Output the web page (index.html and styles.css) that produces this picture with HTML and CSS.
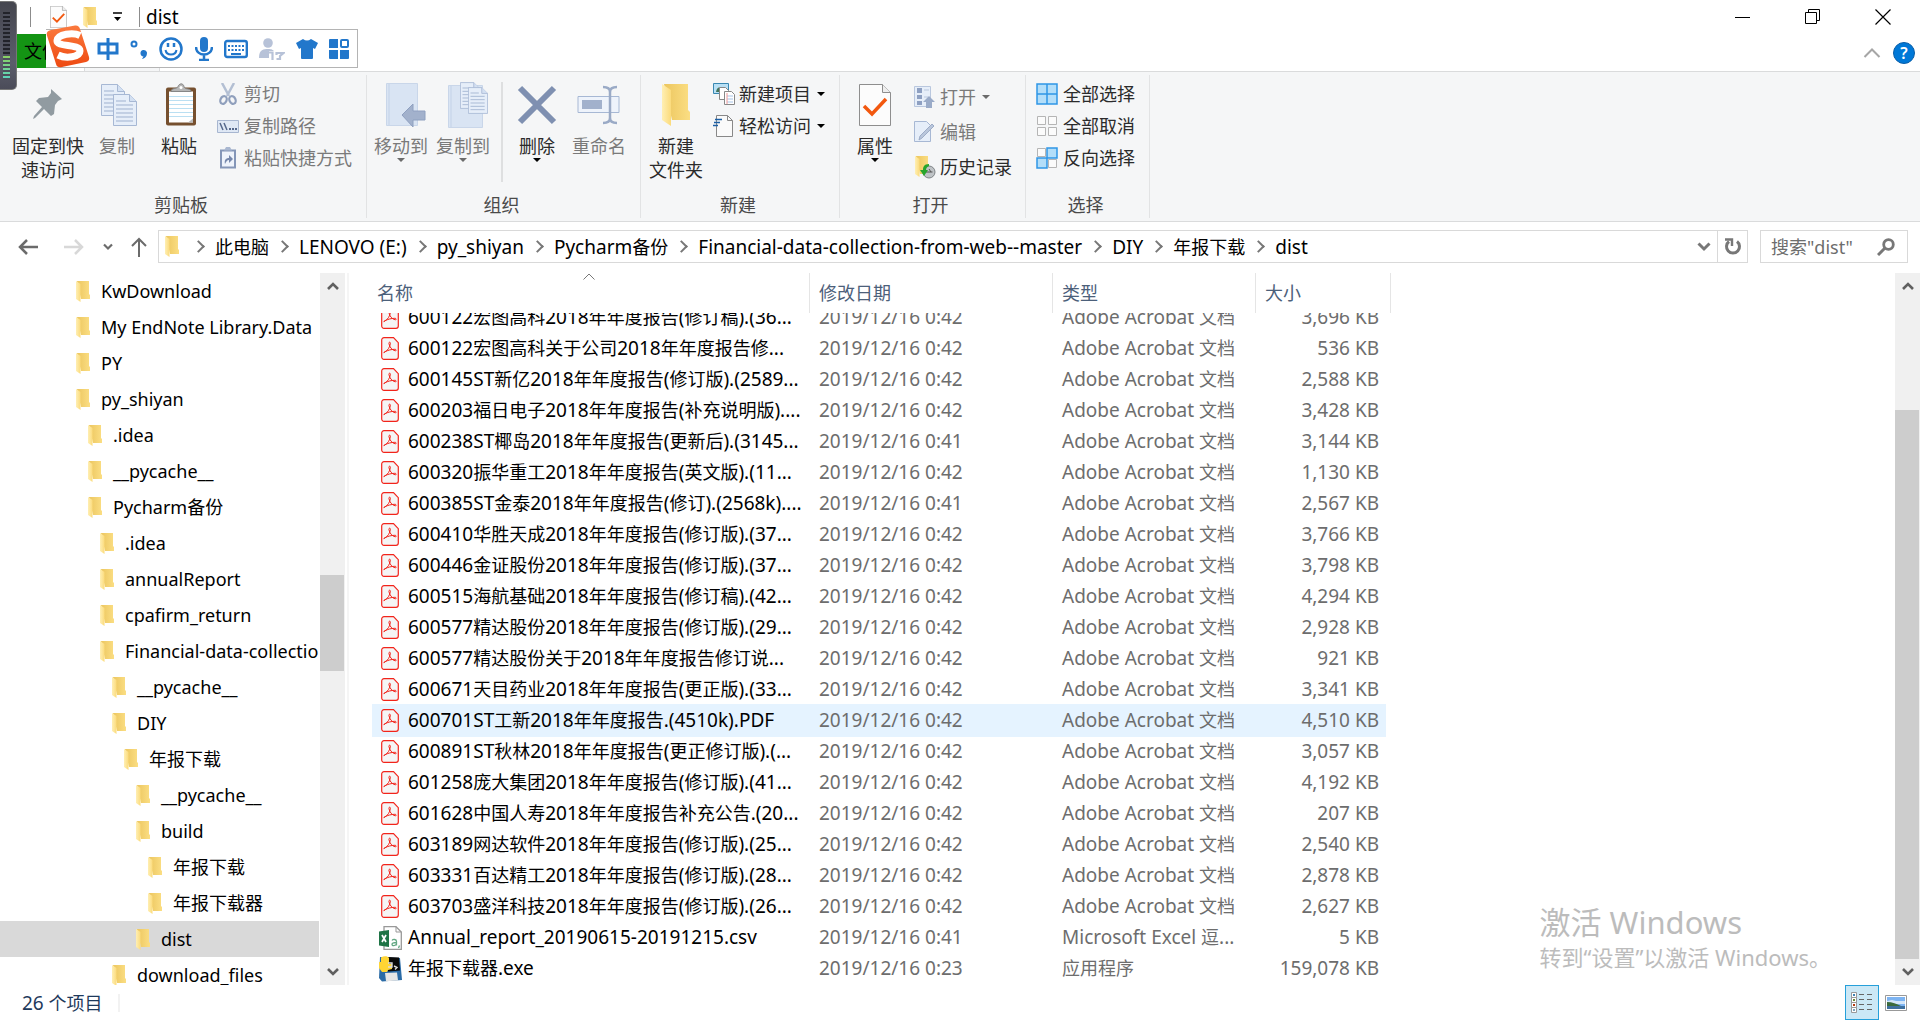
FILE: index.html
```html
<!DOCTYPE html>
<html lang="zh-CN">
<head>
<meta charset="utf-8">
<title>dist</title>
<link rel="stylesheet" href="styles.css">
</head>
<body>
<svg class="defs" width="0" height="0" aria-hidden="true">
  <defs>
    <linearGradient id="g-folder" x1="0" x2="1"><stop offset="0" stop-color="#ecc65f"/><stop offset="1" stop-color="#fbde83"/></linearGradient>
    <linearGradient id="g-flap" x1="0" x2="1"><stop offset="0" stop-color="#ffefb4"/><stop offset="1" stop-color="#fbdb7c"/></linearGradient>
    <linearGradient id="g-sogou" x1="0" y1="0" x2="0" y2="1"><stop offset="0" stop-color="#fb7a3e"/><stop offset="1" stop-color="#ee4a12"/></linearGradient>
    <symbol id="folder" viewBox="0 0 14 21">
      <path d="M1 0h12v13l1 1v4H5z" fill="url(#g-folder)"/>
      <path d="M0 0l4.500 3v18L0 18z" fill="url(#g-flap)"/>
    </symbol>
    <symbol id="pdf" viewBox="0 0 18 23">
      <path d="M3 .7h9.500l4.800 5V20a2.300 2.300 0 0 1-2.300 2.300H3A2.300 2.300 0 0 1 .7 20V3A2.300 2.300 0 0 1 3 .7z" fill="#f5f5f5" stroke="#f2241b" stroke-width="1.200"/>
      <path d="M3.200 15.500c3.500-2 5.800-5.300 6.200-9.200.1-1.500-1.800-1.500-1.500.2.700 3.700 3 6.500 6.200 7.300 1.500.3 1.500-1.500-.2-1.500-3.600 0-7 1-9.800 2.300-1.700.8-1.400 1.900-.9.900z" fill="none" stroke="#f2241b"/>
    </symbol>
    <symbol id="csv" viewBox="0 0 23 24">
      <path d="M5 .7h12l5.300 5.300v17.300H5z" fill="#fff" stroke="#999" stroke-width="1.300"/>
      <path d="M17 .7V6h5.300" fill="none" stroke="#999"/>
      <path d="M0 5.500l10-1.500v17L0 19.500z" fill="#1f7446"/>
      <path d="M3 9l4 7M7 9l-4 7" stroke="#fff" stroke-width="1.700"/>
      <path d="M13 14.500c1-1.500 4.500-1.500 4.500 1v4M17.500 16.500c-3 0-4.500.5-4.500 2s3 1.800 4.500-.5M20.500 19.500l-1 2.500" fill="none" stroke="#64a884" stroke-width="1.300"/>
    </symbol>
    <symbol id="exe" viewBox="0 0 24 26">
      <path d="M2 1l20 1 2 22-20 1.500L1 22z" fill="#2b6ba6"/>
      <path d="M10 1l11 .5 1 13-12 1z" fill="#0a0a0a"/>
      <path d="M7 17l12-.5 1 8-12 .8z" fill="#e6e6e6"/>
      <path d="M3 1.500C6-.5 10 0 11 2v6h3v5l-4 1-1 2-5 0-3-4V6h2z" fill="#ffd534"/>
      <path d="M10 7h4v4h-4M16 10l3 1.500-2 2" fill="none" stroke="#ddd" stroke-width="1.400"/>
    </symbol>
    <symbol id="up" viewBox="0 0 12 10"><path d="M1 8l5-5 5 5" fill="none" stroke="#606060" stroke-width="2.600"/></symbol>
    <symbol id="down" viewBox="0 0 12 10"><path d="M1 2l5 5 5-5" fill="none" stroke="#606060" stroke-width="2.600"/></symbol>
    <symbol id="doc-check" viewBox="0 0 32 42">
      <path d="M.5.500h23l8 8v33H.5z" fill="#fcfcfc" stroke="#8e8e8e"/>
      <path d="M23.500.5v8h8" fill="#eee" stroke="#8e8e8e"/>
      <path d="M5 22l8 8 14-15" fill="none" stroke="#f2580f" stroke-width="3.500"/>
    </symbol>
    <symbol id="page" viewBox="0 0 24 32">
      <path d="M.5.500h16l7 7v24H.5z" fill="#e6eef9" stroke="#a7b8d4"/>
      <path d="M16.500.5v7h7" fill="#d3e0f2" stroke="#a7b8d4"/>
      <path d="M3 7h10M3 11h17M3 15h17M3 19h17M3 23h17M3 27h17" stroke="#9fb1cf" fill="none"/>
    </symbol>
  </defs>
</svg>

<div class="window">
  <header class="titlebar">
    <span class="bar bar-first"></span>
    <button class="plain" aria-label="属性"><svg width="17" height="22"><use href="#doc-check"/></svg></button>
    <button class="plain" aria-label="新建文件夹"><svg width="14" height="21"><use href="#folder"/></svg></button>
    <button class="plain" aria-label="自定义快速访问工具栏"><svg width="10" height="10" viewBox="0 0 10 10"><path d="M0 1h9" stroke="#000" stroke-width="1.500"/><path d="M1 5h7L4.500 9z"/></svg></button>
    <span class="bar"></span>
    <h1 class="title">dist</h1>
    <div class="window-buttons">
      <button class="plain" aria-label="最小化"><svg width="16" height="16"><path d="M0 8.500h15" stroke="#000"/></svg></button>
      <button class="plain" aria-label="还原"><svg width="16" height="16"><path d="M.5 3.500h11v11H.5zM3.500 3.500v-3h11v11h-3" fill="none" stroke="#000"/></svg></button>
      <button class="plain" aria-label="关闭"><svg width="16" height="16"><path d="M.5.500l15 15M15.500.500l-15 15" stroke="#000" stroke-width="1.200"/></svg></button>
    </div>
  </header>

  <div class="tabs">
    <button class="file-tab">文件</button>
    <span class="home-tab"></span>
    <div class="tab-tools">
      <button class="plain" aria-label="最小化功能区"><svg width="18" height="12"><path d="M1.500 10l7.500-7.500 7.500 7.500" fill="none" stroke="#a6a6a6" stroke-width="2"/></svg></button>
      <button class="help" aria-label="帮助">?</button>
    </div>
  </div>

  <section class="ribbon">
    <div class="group clipboard">
      <div class="tools">
        <button class="big pin"><svg width="32" height="42" viewBox="0 0 32 42"><path d="M19 5l11 10-4 2-3 4-1 9-3 2-7-7-9 9-2 1 1-3 8-9-6-6 3-3 9-1 3-4z" fill="#919ba1"/></svg>固定到快<br>速访问</button>
        <button class="big copy" disabled><svg width="36" height="42" viewBox="0 0 36 42"><use href="#page" width="24" height="32"/><use href="#page" x="12" y="10" width="24" height="32"/></svg>复制</button>
        <button class="big paste"><svg width="32" height="43" viewBox="0 0 32 43"><rect x="1" y="4" width="30" height="38" rx="2" fill="#76502f"/><path d="M4 8h24v31H4z" fill="#fff"/><path d="M4 13h24M4 17h24M4 21h24M4 25h24M4 29h24M4 33h24" stroke="#badff2"/><path d="M23 39l5-4v4z" fill="#bbb"/><path d="M6 8c0-4 6-2 7-5s5-4 6 0 7 1 7 5z" fill="#b6b6b6" stroke="#878787"/><circle cx="16" cy="4" r="1.500" fill="#fff"/></svg>粘贴</button>
        <div class="stack">
          <button class="small" disabled><svg width="22" height="22" viewBox="0 0 22 22"><path d="M5 0l7 13M17 0l-7 13" stroke="#b3bfd3" stroke-width="2.500"/><ellipse cx="6.500" cy="17" rx="3" ry="4" transform="rotate(25 6.500 17)" fill="none" stroke="#8f9fbc" stroke-width="2.200"/><ellipse cx="15.500" cy="17" rx="3" ry="4" transform="rotate(-25 15.500 17)" fill="none" stroke="#8f9fbc" stroke-width="2.200"/></svg>剪切</button>
          <button class="small" disabled><svg width="22" height="22" viewBox="0 0 22 22"><path d="M.5 5.500h21v12H.5z" fill="#dfe8f5" stroke="#a7b6d0"/><path d="M3 8l3 7M7 8l3 7" stroke="#55688c" stroke-width="1.500"/><path d="M12 14h2M15 14h2M18 14h2" stroke="#55688c" stroke-width="2"/></svg>复制路径</button>
          <button class="small" disabled><svg width="22" height="22" viewBox="0 0 22 22"><path d="M4 3.500h14v17H4z" fill="#eef3fb" stroke="#8496b8" stroke-width="2"/><path d="M7 3.500h8L13 0H9z" fill="#a9b7d0"/><path d="M8 17c-1-4 1-6 4-6V8l4 4-4 4v-3c-2 0-3 2-4 4z" fill="#7688ac"/></svg>粘贴快捷方式</button>
        </div>
      </div>
      <h2>剪贴板</h2>
    </div>

    <div class="group organize">
      <div class="tools">
        <button class="big org" disabled><svg width="40" height="44" viewBox="0 0 40 44"><path d="M.5.500h31v42H.5z" fill="#d9e4f3" stroke="#c9d6e9"/><path d="M3 1v41" stroke="#c3d2e8"/><path d="M16 32l11-11v7h12v9H27v7z" fill="#a2b1cc" stroke="#8fa0c0"/></svg>移动到<i class="arrow"></i></button>
        <button class="big org" disabled><svg width="40" height="46" viewBox="0 0 40 46"><path d="M.5 3.500h34v42H.5z" fill="#d9e4f3" stroke="#c9d6e9"/><path d="M3 4v41" stroke="#c3d2e8"/><use href="#page" x="12" y="0" width="20" height="27"/><use href="#page" x="20" y="5" width="20" height="27"/></svg>复制到<i class="arrow"></i></button>
        <span class="divider"></span>
        <button class="big del"><svg width="40" height="40" viewBox="0 0 40 40"><path d="M3 3l34 34M37 3L3 37" stroke="#7f90b1" stroke-width="6"/></svg>删除<i class="arrow"></i></button>
        <button class="big ren" disabled><svg width="44" height="40" viewBox="0 0 44 40"><path d="M1 11.500h41v16H1z" fill="#eef3fb" stroke="#a7b8d4"/><path d="M5 15h20v9H5z" fill="#a2b1cc"/><path d="M26 2c5 0 7 2 7 5v26c0 3-2 5-7 5M40 2c-5 0-7 2-7 5v26c0 3 2 5 7 5" fill="none" stroke="#9aaac6" stroke-width="2.500"/></svg>重命名</button>
      </div>
      <h2>组织</h2>
    </div>

    <div class="group create">
      <div class="tools">
        <button class="big new"><svg width="28" height="42"><use href="#folder"/></svg>新建<br>文件夹</button>
        <div class="stack">
          <button class="small"><svg width="22" height="22" viewBox="0 0 22 22"><path d="M.5.500h15v10H.5z" fill="#b9e0f5" stroke="#3a88b2"/><path d="M3 9c1-6 5-6 6 0z" fill="#42765e"/><path d="M6.500 4.500h6l3 3v9h-9z" fill="#fff" stroke="#888"/><path d="M11.500 8.500h7l3 3v10h-10z" fill="#fff" stroke="#888"/><path d="M14 13h6M14 16h6M14 19h6" stroke="#a6c4e8"/><path d="M14 10v11" stroke="#e99"/></svg>新建项目<i class="arrow"></i></button>
          <button class="small"><svg width="22" height="22" viewBox="0 0 22 22"><path d="M3.500.500h11l5 5v16h-16z" fill="#fafafa" stroke="#888"/><path d="M14.500.5v5h5" fill="none" stroke="#888"/><path d="M2 4.500h7M1 7.500h6M0 10.500h5" stroke="#1d5fa5" stroke-width="1.500"/></svg>轻松访问<i class="arrow"></i></button>
        </div>
      </div>
      <h2>新建</h2>
    </div>

    <div class="group open">
      <div class="tools">
        <button class="big prop"><svg width="32" height="42"><use href="#doc-check"/></svg>属性<i class="arrow"></i></button>
        <div class="stack wide">
          <button class="small" disabled><svg width="22" height="24" viewBox="0 0 22 24"><path d="M.5 1.500h16v20H.5z" fill="#e6eef9" stroke="#b9c7de"/><path d="M3 3h5v5H3zM3 10h5v4H3zM3 16h5v4H3z" fill="#8ea0c2"/><path d="M10 5h5M10 12h4" stroke="#b9c7de"/><path d="M15 11l6 6h-3v6h-6v-6H9z" fill="#9aabc8"/></svg>打开<i class="arrow"></i></button>
          <button class="small" disabled><svg width="22" height="24" viewBox="0 0 22 24"><path d="M.5 1.500h12l4 4v16H.5z" fill="#e6eef9" stroke="#a7b8d4"/><path d="M5 20l1-4L18 4l2 2L8 18z" fill="#b9c6db" stroke="#9dacc7"/></svg>编辑</button>
          <button class="small"><svg width="22" height="24" viewBox="0 0 22 24"><use href="#folder" x="1" y="1" width="14" height="21"/><circle cx="15" cy="17" r="6" fill="#bfc3c6" stroke="#7e8386"/><path d="M11.500 17h7M15 14l2 3" stroke="#555"/><path d="M15 9c-5 0-6 3-6 6H6l4 6 4-6h-2c0-2 1-3 3-4z" fill="#27a52c"/></svg>历史记录</button>
        </div>
      </div>
      <h2>打开</h2>
    </div>

    <div class="group select">
      <div class="tools">
        <div class="stack">
          <button class="small"><svg width="22" height="22" viewBox="0 0 22 22"><path d="M1 1h10v10H1zM11 1h10v10H11zM1 11h10v10H1zM11 11h10v10H11z" fill="#b3def9" stroke="#2f96e6" stroke-width="1.500"/></svg>全部选择</button>
          <button class="small"><svg width="22" height="22" viewBox="0 0 22 22"><path d="M1.500 1.500h8v8h-8zM12.500 1.500h8v8h-8zM1.500 12.500h8v8h-8zM12.500 12.500h8v8h-8z" fill="#fbfbfb" stroke="#b5b5b5"/></svg>全部取消</button>
          <button class="small"><svg width="22" height="22" viewBox="0 0 22 22"><path d="M1.500 1.500h8v8h-8zM12.500 12.500h8v8h-8z" fill="#fbfbfb" stroke="#b5b5b5"/><path d="M11 1h10v10H11zM1 11h10v10H1z" fill="#b3def9" stroke="#2f96e6" stroke-width="1.500"/></svg>反向选择</button>
        </div>
      </div>
      <h2>选择</h2>
    </div>
  </section>

  <nav class="address-row">
    <div class="history">
      <button class="plain" aria-label="后退"><svg width="20" height="16"><path d="M9 1L2 8l7 7M2 8h18" fill="none" stroke="#6b6b6b" stroke-width="2.500"/></svg></button>
      <button class="plain" aria-label="前进"><svg width="20" height="16"><path d="M11 1l7 7-7 7M18 8H0" fill="none" stroke="#d8d8d8" stroke-width="2.500"/></svg></button>
      <button class="plain" aria-label="最近浏览的位置"><svg width="10" height="8"><path d="M1 1.500l4 4 4-4" fill="none" stroke="#6b6b6b" stroke-width="2.200"/></svg></button>
      <button class="plain" aria-label="上移"><svg width="16" height="20"><path d="M1 9l7-7 7 7M8 2v18" fill="none" stroke="#6b6b6b" stroke-width="2"/></svg></button>
    </div>
    <div class="address">
      <svg width="14" height="21"><use href="#folder"/></svg>
      <ol class="crumbs">
        <li>此电脑</li><li class="la">LENOVO (E:)</li><li class="la">py_shiyan</li><li><span class="la">Pycharm</span>备份</li><li class="la">Financial-data-collection-from-web--master</li><li class="la">DIY</li><li>年报下载</li><li class="la">dist</li>
      </ol>
      <button class="plain" aria-label="以前的位置"><svg width="14" height="10"><path d="M1.500 1.500L7 7l5.500-5.500" fill="none" stroke="#777" stroke-width="3"/></svg></button>
      <button class="plain refresh" aria-label="刷新"><svg width="18" height="18"><path d="M13 3.500a6.500 6.500 0 1 1-8 0" fill="none" stroke="#777" stroke-width="3"/><path d="M1 1.500h7V8" fill="none" stroke="#777" stroke-width="2.400"/></svg></button>
    </div>
    <label class="search"><input type="text" placeholder='搜索"dist"' aria-label="搜索"><svg width="18" height="18"><circle cx="11.500" cy="6.500" r="4.800" fill="none" stroke="#777" stroke-width="2.800"/><path d="M8 10l-7 7" stroke="#777" stroke-width="3"/></svg></label>
  </nav>

  <main class="panes">
    <ul class="tree">
      <li class="l0">KwDownload</li>
      <li class="l0">My EndNote Library.Data</li>
      <li class="l0">PY</li>
      <li class="l0">py_shiyan</li>
      <li class="l1">.idea</li>
      <li class="l1">__pycache__</li>
      <li class="l1">Pycharm备份</li>
      <li class="l2">.idea</li>
      <li class="l2">annualReport</li>
      <li class="l2">cpafirm_return</li>
      <li class="l2">Financial-data-collection-from-web--master</li>
      <li class="l3">__pycache__</li>
      <li class="l3">DIY</li>
      <li class="l4">年报下载</li>
      <li class="l5">__pycache__</li>
      <li class="l5">build</li>
      <li class="l6">年报下载</li>
      <li class="l6">年报下载器</li>
      <li class="l5 selected">dist</li>
      <li class="l3">download_files</li>
    </ul>
    <div class="scrollbar tree-scroll">
      <button aria-label="向上滚动"><svg width="12" height="10"><use href="#up"/></svg></button>
      <span class="gap-before"></span><span class="thumb"></span><span class="gap-after"></span>
      <button aria-label="向下滚动"><svg width="12" height="10"><use href="#down"/></svg></button>
    </div>
    <section class="files">
      <table>
        <thead><tr><th class="c-name">名称<svg class="sort" width="12" height="7"><path d="M.5 6.500l5.500-5.500 5.500 5.500" fill="none" stroke="#777"/></svg></th><th class="c-date">修改日期</th><th class="c-type">类型</th><th class="c-size">大小</th></tr></thead>
        <tbody id="rows"></tbody>
      </table>
      <aside class="watermark"><p class="wm-title">激活 Windows</p><p>转到“设置”以激活 Windows。</p></aside>
    </section>
    <div class="scrollbar file-scroll">
      <button aria-label="向上滚动"><svg width="12" height="10"><use href="#up"/></svg></button>
      <span class="gap-before"></span><span class="thumb"></span>
      <button aria-label="向下滚动"><svg width="12" height="10"><use href="#down"/></svg></button>
    </div>
  </main>

  <footer class="status">
    <span class="count"><span class="la">26</span> 个项目</span>
    <div class="views">
      <button class="details" aria-label="详细信息"><svg width="22" height="22"><path d="M.5.500h5v5h-5zM.5 5.500h5v5h-5zM.5 10.500h5v5h-5zM.5 15.500h5v5h-5z" fill="#fff" stroke="#999"/><path d="M2 3h2" stroke="#3b83b5" stroke-width="2"/><path d="M2 8h2" stroke="#6a8a3a" stroke-width="2"/><path d="M2 13h2" stroke="#b33a12" stroke-width="2"/><path d="M2 18h2" stroke="#7ba3bb" stroke-width="2"/><path d="M8 2.500h5M16 2.500h5M8 7.500h5M16 7.500h5M8 12.500h5M16 12.500h5M8 17.500h5M16 17.500h5" stroke="#666"/></svg></button>
      <button class="plain" aria-label="大缩略图"><svg width="22" height="16"><path d="M.5.500h21v15H.5z" fill="#fff" stroke="#999"/><path d="M2 2h18v12H2z" fill="#7db4f2"/><path d="M2 6l5-1 4 1h9v3H2z" fill="#d3e6f9"/><path d="M2 7c5 0 10 2 14 4H2z" fill="#3a6a3c"/><path d="M2 11h18v3H2z" fill="#3d6f9e"/></svg></button>
    </div>
  </footer>

  <div class="meter" aria-hidden="true"><span></span></div>

  <div class="ime">
    <svg class="sogou" width="46" height="44" viewBox="0 0 46 44"><path d="M5 5L29 .5q4-.5 5 3.500l9 28q1 4-3 5L16 42q-5 1-6-3L.8 10Q0 6 5 5z" fill="url(#g-sogou)"/><path d="M34 10.500C27 7 12 9 11 15.500c-1 7 23 3 23 10.500 0 6-14 8-22 4" fill="none" stroke="#fff" stroke-width="7"/></svg>
    <svg width="22" height="22" viewBox="0 0 22 22"><path d="M2 6h18v9H2zM11 0v22" fill="none" stroke="#2277cb" stroke-width="3"/></svg>
    <svg width="18" height="22" viewBox="0 0 18 22"><circle cx="4" cy="6" r="2.500" fill="none" stroke="#2277cb" stroke-width="2"/><path d="M13.500 18.500a3.300 3.300 0 1 1 3.500-4c0 4-2 6-5 6.500z" fill="#2277cb"/></svg>
    <svg width="24" height="24" viewBox="0 0 24 24"><circle cx="12" cy="12" r="10.500" fill="none" stroke="#2277cb" stroke-width="2.500"/><path d="M6.500 13c1 6 10 6 11 0" fill="none" stroke="#2277cb" stroke-width="2"/><path d="M9 6v4M15 6v4" stroke="#2277cb" stroke-width="2.500"/></svg>
    <svg width="18" height="24" viewBox="0 0 18 24"><rect x="5" y="0" width="8" height="15" rx="4" fill="#2277cb"/><path d="M1 10c0 10 16 10 16 0M9 17v6M4 23h10" fill="none" stroke="#2277cb" stroke-width="2.500"/></svg>
    <svg width="24" height="20" viewBox="0 0 24 20"><rect x="1.200" y="2" width="21.600" height="16" rx="2" fill="none" stroke="#2277cb" stroke-width="2.400"/><path d="M4 7h16M4 11h16" stroke="#2277cb" stroke-width="2" stroke-dasharray="2 1.500"/><path d="M7 15h10" stroke="#2277cb" stroke-width="2"/></svg>
    <svg width="26" height="22" viewBox="0 0 26 22"><circle cx="9" cy="5" r="4.800" fill="#b7c2d8"/><path d="M0 20c0-9 5-9 9-9s5 1 6 2h-5v7z" fill="#b7c2d8"/><path d="M10 14.500h3.500V22M17 15h7.500l-3.500 3v3h-3.500M17.500 14v3" fill="none" stroke="#b7c2d8" stroke-width="2.200"/></svg>
    <svg width="22" height="22" viewBox="0 0 22 22"><path d="M7 1q4 3 8 0l7 4-3 6-2-1v10q0 1-1 1H6q-1 0-1-1V10l-2 1-3-6z" fill="#2277cb"/></svg>
    <svg width="20" height="20" viewBox="0 0 20 20"><path d="M0 1q0-1 1-1h8v9H0zM0 11h9v9H1q-1 0-1-1zM11 11h9v8q0 1-1 1h-8z" fill="#2277cb"/><rect x="12" y="1" width="7" height="7" rx="1" fill="none" stroke="#2277cb" stroke-width="2"/></svg>
  </div>
</div>
<script src="files.js"></script>
</body>
</html>
```

FILE: styles.css
```css
* { box-sizing: border-box; }
body {
  margin: 0;
  background: #fff;
  color: #000;
  font: 18px/24px "Noto Sans", "Noto Sans CJK SC", sans-serif;
}
h1, h2, p, ul, ol { margin: 0; padding: 0; font-weight: 400; font-size: 18px; list-style: none; }
button { font: inherit; color: inherit; border: 0; padding: 0; background: none; }
.defs { position: absolute; }
.la { font-size: 19px; }
.tree .la { font-size: 18px; }
.window { position: relative; display: flex; flex-direction: column; min-height: 100vh; overflow: hidden; }
.plain { display: flex; align-items: center; justify-content: center; }

.titlebar { display: flex; align-items: center; height: 34px; padding-left: 30px; gap: 16px; }
.titlebar .bar { width: 1px; height: 20px; background: #8c8c8c; }
.titlebar .bar-first { margin-right: 3px; }
.title { margin-left: -10px; font-size: 19px; }
.window-buttons { display: flex; margin-left: auto; padding-right: 2px; }
.window-buttons button { width: 70px; height: 34px; }

.tabs { display: flex; height: 37px; }
.file-tab { width: 84px; height: 34px; padding-left: 24px; background: #149414; text-align: left; }
.home-tab { width: 76px; border: solid #dadbdc; border-width: 0 1px; background: #f5f6f7; }
.tab-tools { display: flex; align-items: center; gap: 12px; margin-left: auto; padding-right: 5px; }
.help { width: 22px; height: 22px; border-radius: 50%; border: 1px solid #0a5ea8; background: #0078d7; color: #fff; font-size: 16px; line-height: 20px; font-weight: 600; }

.ribbon { display: flex; height: 151px; padding: 3px 0; background: #f5f6f7; border: solid #dadbdc; border-width: 1px 0; color: #2b2b2b; }
.group { display: flex; flex-direction: column; border-right: 1px solid #e2e3e4; }
.group h2 { margin-top: auto; padding: 0 4px 2px 0; text-align: center; color: #4a4a4a; line-height: 22px; }
.tools { display: flex; padding-top: 7px; }
.clipboard { width: 367px; }
.clipboard .tools { padding-left: 10px; }
.organize { width: 274px; }
.organize .tools { padding-left: 3px; }
.create { width: 199px; }
.open { width: 186px; }
.select { width: 124px; }
.big { display: flex; flex-direction: column; align-items: center; justify-content: flex-start; width: 62px; }
.big svg { height: 46px; margin-bottom: 6px; }
.copy svg, .paste svg { margin-left: 4px; }
.org svg { margin-left: 10px; }
.pin { width: 76px; }
.new, .prop { width: 70px; }
.divider { width: 2px; height: 100px; margin-left: 7px; background: #dedfe0; }
.del { margin-left: 3px; }
button:disabled { color: #7a7a7a; }
.arrow { width: 0; height: 0; border: solid transparent; border-width: 4px 4px 0; border-top-color: #000; }
button:disabled .arrow { border-top-color: #6b6b6b; }
.stack { display: flex; flex-direction: column; padding-left: 2px; gap: 8px; }
.clipboard .stack { padding-left: 7px; }
.select .stack { padding-left: 10px; }
.stack.wide { gap: 11px; padding: 3px 0 0 4px; }
.small { display: flex; align-items: center; gap: 5px; height: 24px; white-space: nowrap; }
.small .arrow { margin-left: 2px; }
.create .small, .open .small { gap: 4px; }

.address-row { display: flex; height: 51px; padding: 8px 12px 0 18px; }
.history { display: flex; align-items: center; width: 140px; height: 33px; justify-content: space-between; padding-right: 11px; }
.history button:nth-child(2) { margin-left: 8px; }
.address { display: flex; flex: 1; align-items: center; height: 33px; border: 1px solid #d9d9d9; padding-left: 6px; }
.crumbs { display: flex; flex: 1; }
.crumbs li { display: flex; align-items: center; white-space: nowrap; }
.crumbs li::before { content: ""; width: 7px; height: 7px; margin: 0 12px 0 9px; border: solid #777; border-width: 2px 2px 0 0; transform: rotate(45deg); }
.crumbs li:first-child::before { margin-left: 15px; }
.refresh { width: 30px; height: 31px; margin-left: 6px; border-left: 1px solid #d9d9d9; }
.search { display: flex; align-items: center; width: 148px; height: 33px; margin-left: 12px; padding: 0 12px 0 10px; border: 1px solid #d9d9d9; }
.search input { flex: 1; min-width: 0; width: 80px; padding: 0; border: 0; outline: 0; font: inherit; }
.search input::placeholder { color: #6d6d6d; }

.panes { display: flex; flex: 1; height: 712px; }
.tree { width: 320px; height: 712px; overflow: hidden; border-right: 1px solid #fff; }
.tree li { height: 36px; line-height: 36px; white-space: nowrap; overflow: hidden; }
.tree svg { margin-right: 11px; vertical-align: middle; position: relative; top: -2px; }
.l0 { padding-left: 76px; }
.l1 { padding-left: 88px; }
.l2 { padding-left: 100px; }
.l3 { padding-left: 112px; }
.l4 { padding-left: 124px; }
.l5 { padding-left: 136px; }
.l6 { padding-left: 148px; }
.selected { background: #d9d9d9; }

.scrollbar { display: flex; flex-direction: column; width: 25px; height: 712px; background: #f0f0f0; }
.scrollbar button { display: flex; align-items: center; justify-content: center; height: 26px; flex: none; }
.thumb { background: #cdcdcd; margin-right: 1px; }
.tree-scroll .gap-before { flex: 276; }
.tree-scroll .thumb { flex: 96; }
.tree-scroll .gap-after { flex: 288; }
.file-scroll .gap-before { flex: 111; }
.file-scroll .thumb { flex: 549; }

.files { position: relative; flex: 1; margin-left: 2px; border-left: 2px solid #f5f5f5; padding-left: 23px; }
table { border-collapse: separate; border-spacing: 0; table-layout: fixed; width: 1019px; }
th { position: relative; height: 40px; padding: 0 0 0 9px; border-right: 1px solid #e5e5e5; text-align: left; font-weight: 400; color: #4c607a; }
th.c-name { width: 438px; padding-left: 5px; }
th.c-date { width: 243px; }
th.c-type { width: 203px; }
th.c-size { width: 135px; }
.sort { position: absolute; left: 211px; top: 0; }
td { height: 31px; padding: 0; line-height: 31px; color: #6d6d6d; }
td > div { display: flex; align-items: center; height: 31px; padding-left: 9px; white-space: nowrap; }
td.name > div { padding-left: 6px; color: #000; }
td.size > div { justify-content: flex-end; padding-right: 12px; }
.icon { display: flex; flex: none; justify-content: center; width: 24px; margin-right: 6px; }
.partial td { height: 20px; }
.partial td > div { height: 20px; align-items: flex-end; overflow: hidden; }
.partial .icon { height: 31px; align-items: center; }
.hover td > div { background: #e5f3ff; box-shadow: 0 1px #e5f3ff, 0 -1px #e5f3ff; }
.hover td.size > div { margin-right: 5px; padding-right: 7px; }

.watermark { position: absolute; right: 64px; bottom: 12px; color: #bcbcbc; }
.watermark p { font-size: 22px; line-height: 32px; }
.watermark .wm-title { font-size: 31px; line-height: 38px; }

.status { display: flex; align-items: center; height: 35px; padding-left: 22px; color: #1e395b; }
.count { padding-right: 16px; border-right: 2px solid #f2f2f2; line-height: 18px; }
.views { display: flex; gap: 6px; margin-left: auto; padding-right: 13px; }
.details { display: flex; align-items: center; justify-content: center; width: 34px; height: 35px; border: 1px solid #26a0da; background: #cbe8f6; }

.meter { position: absolute; left: 0; top: 1px; width: 17px; height: 89px; padding: 10px 0 9px 3px; border-radius: 0 5px 5px 0; border: 1px solid #777; border-left: 0; background: linear-gradient(#45464f, #5b5d6b 70%, #4b4c59); }
.meter span { display: block; width: 7px; height: 68px; background: repeating-linear-gradient(transparent 0 2px, #4d4f5b 2px 4px), linear-gradient(#22232a 0 42px, #8fd05a 42px, #59d4c4); }

.ime { position: absolute; left: 46px; top: 29px; display: flex; align-items: center; justify-content: space-between; height: 39px; width: 312px; padding-right: 8px; background: #fff; border: 1px solid #b4b4b4; border-left: 0; }
.ime .sogou { margin: -4px -6px 0 0; }
```

FILE: files.js
```javascript
const acrobat = "Adobe Acrobat 文档";
const files = [
  ["pdf", "600122宏图高科2018年年度报告(修订稿).(36...", "2019/12/16 0:42", acrobat, "3,696 KB", "partial"],
  ["pdf", "600122宏图高科关于公司2018年年度报告修...", "2019/12/16 0:42", acrobat, "536 KB"],
  ["pdf", "600145ST新亿2018年年度报告(修订版).(2589...", "2019/12/16 0:42", acrobat, "2,588 KB"],
  ["pdf", "600203福日电子2018年年度报告(补充说明版)....", "2019/12/16 0:42", acrobat, "3,428 KB"],
  ["pdf", "600238ST椰岛2018年年度报告(更新后).(3145...", "2019/12/16 0:41", acrobat, "3,144 KB"],
  ["pdf", "600320振华重工2018年年度报告(英文版).(11...", "2019/12/16 0:42", acrobat, "1,130 KB"],
  ["pdf", "600385ST金泰2018年年度报告(修订).(2568k)....", "2019/12/16 0:41", acrobat, "2,567 KB"],
  ["pdf", "600410华胜天成2018年年度报告(修订版).(37...", "2019/12/16 0:42", acrobat, "3,766 KB"],
  ["pdf", "600446金证股份2018年年度报告(修订版).(37...", "2019/12/16 0:42", acrobat, "3,798 KB"],
  ["pdf", "600515海航基础2018年年度报告(修订稿).(42...", "2019/12/16 0:42", acrobat, "4,294 KB"],
  ["pdf", "600577精达股份2018年年度报告(修订版).(29...", "2019/12/16 0:42", acrobat, "2,928 KB"],
  ["pdf", "600577精达股份关于2018年年度报告修订说...", "2019/12/16 0:42", acrobat, "921 KB"],
  ["pdf", "600671天目药业2018年年度报告(更正版).(33...", "2019/12/16 0:42", acrobat, "3,341 KB"],
  ["pdf", "600701ST工新2018年年度报告.(4510k).PDF", "2019/12/16 0:42", acrobat, "4,510 KB", "hover"],
  ["pdf", "600891ST秋林2018年年度报告(更正修订版).(...", "2019/12/16 0:42", acrobat, "3,057 KB"],
  ["pdf", "601258庞大集团2018年年度报告(修订版).(41...", "2019/12/16 0:42", acrobat, "4,192 KB"],
  ["pdf", "601628中国人寿2018年年度报告补充公告.(20...", "2019/12/16 0:42", acrobat, "207 KB"],
  ["pdf", "603189网达软件2018年年度报告(修订版).(25...", "2019/12/16 0:42", acrobat, "2,540 KB"],
  ["pdf", "603331百达精工2018年年度报告(修订版).(28...", "2019/12/16 0:42", acrobat, "2,878 KB"],
  ["pdf", "603703盛洋科技2018年年度报告(修订版).(26...", "2019/12/16 0:42", acrobat, "2,627 KB"],
  ["csv", "Annual_report_20190615-20191215.csv", "2019/12/16 0:41", "Microsoft Excel 逗...", "5 KB"],
  ["exe", "年报下载器.exe", "2019/12/16 0:23", "应用程序", "159,078 KB"]
];
const iconSize = { pdf: [18, 23], csv: [23, 24], exe: [24, 26] };

// Latin runs are set one pixel larger than the Chinese text around them.
const mixed = text => text.replace(/[\x20-\x7e]+/g, run => `<span class="la">${run}</span>`);
const svg = (id, [w, h]) => `<svg width="${w}" height="${h}"><use href="#${id}"/></svg>`;

document.getElementById("rows").innerHTML = files.map(([kind, name, date, type, size, state]) => `
  <tr class="${state || ""}">
    <td class="name"><div><span class="icon">${svg(kind, iconSize[kind])}</span><span>${mixed(name)}</span></div></td>
    <td><div><span>${mixed(date)}</span></div></td>
    <td><div><span>${mixed(type)}</span></div></td>
    <td class="size"><div><span>${mixed(size)}</span></div></td>
  </tr>`).join("");

document.querySelectorAll(".tree li").forEach(li => {
  li.innerHTML = svg("folder", [14, 21]) + mixed(li.textContent);
});
```
